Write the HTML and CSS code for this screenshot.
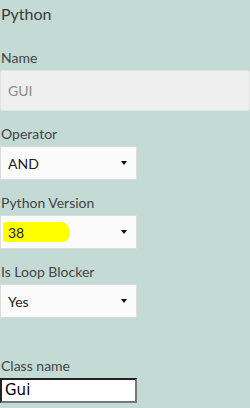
FILE: index.html
```html
<!DOCTYPE html>
<html>
<head>
<meta charset="utf-8">
<link rel="stylesheet" href="styles.css">
</head>
<body>
<div class="panel">
  <div class="title">Python</div>

  <div class="field field-name">
    <div class="label">Name</div>
    <div class="text-input">GUI</div>
  </div>

  <div class="field">
    <div class="label">Operator</div>
    <div class="select"><span class="value">AND</span><span class="caret"></span></div>
  </div>

  <div class="field">
    <div class="label">Python Version</div>
    <div class="select"><span class="highlight"></span><span class="value">38</span><span class="caret"></span></div>
  </div>

  <div class="field">
    <div class="label">Is Loop Blocker</div>
    <div class="select"><span class="value">Yes</span><span class="caret"></span></div>
  </div>

  <div class="field field-class">
    <div class="label">Class name</div>
    <div class="class-input">Gui</div>
  </div>
</div>
</body>
</html>
```

FILE: styles.css
```css
html, body {
  margin: 0;
  padding: 0;
  background: #c4dad5;
}
body {
  font-family: Lato, "Open Sans", sans-serif;
  color: #444;
  width: 250px;
  height: 408px;
  overflow: hidden;
}
.panel {
  display: flex;
  flex-direction: column;
}
.title {
  font-size: 16px;
  line-height: 20px;
  padding: 4px 0 0 1px;
  color: #3a3a3a;
}
.field {
  display: flex;
  flex-direction: column;
  margin-top: 13px;
}
.field-name {
  margin-top: 24px;
}
.field-class {
  margin-top: 38px;
}
.label {
  font-size: 14px;
  line-height: 20px;
  padding-left: 1px;
  margin-bottom: 2px;
  color: #444;
}
.text-input {
  height: 41px;
  box-sizing: border-box;
  background: #efefef;
  border: 1px solid #e0e4e2;
  border-radius: 2px;
  color: #8a8a8a;
  font-size: 14px;
  display: flex;
  align-items: center;
  padding-left: 7px;
}
.select {
  position: relative;
  width: 137px;
  height: 34px;
  box-sizing: border-box;
  background: #fbfbfb;
  border: 1px solid #dcdcdc;
  display: flex;
  align-items: center;
  justify-content: space-between;
  padding: 0 9px 0 7px;
  font-size: 14px;
  color: #222;
}
.value {
  position: relative;
}
.caret {
  width: 0;
  height: 0;
  border-left: 3px solid transparent;
  border-right: 3px solid transparent;
  border-top: 4px solid #111;
}
.highlight {
  position: absolute;
  left: 2px;
  top: 6px;
  width: 66px;
  height: 20px;
  background: #ffff00;
  border-radius: 3px 8px 6px 3px;
}
.class-input {
  width: 137px;
  height: 25px;
  box-sizing: border-box;
  background: #fff;
  border-top: 2px solid #222;
  border-left: 2px solid #222;
  border-right: 2px solid #777;
  border-bottom: 2px solid #777;
  font-family: "DejaVu Sans", sans-serif;
  font-size: 15px;
  color: #000;
  padding-left: 3px;
  line-height: 21px;
}
```
